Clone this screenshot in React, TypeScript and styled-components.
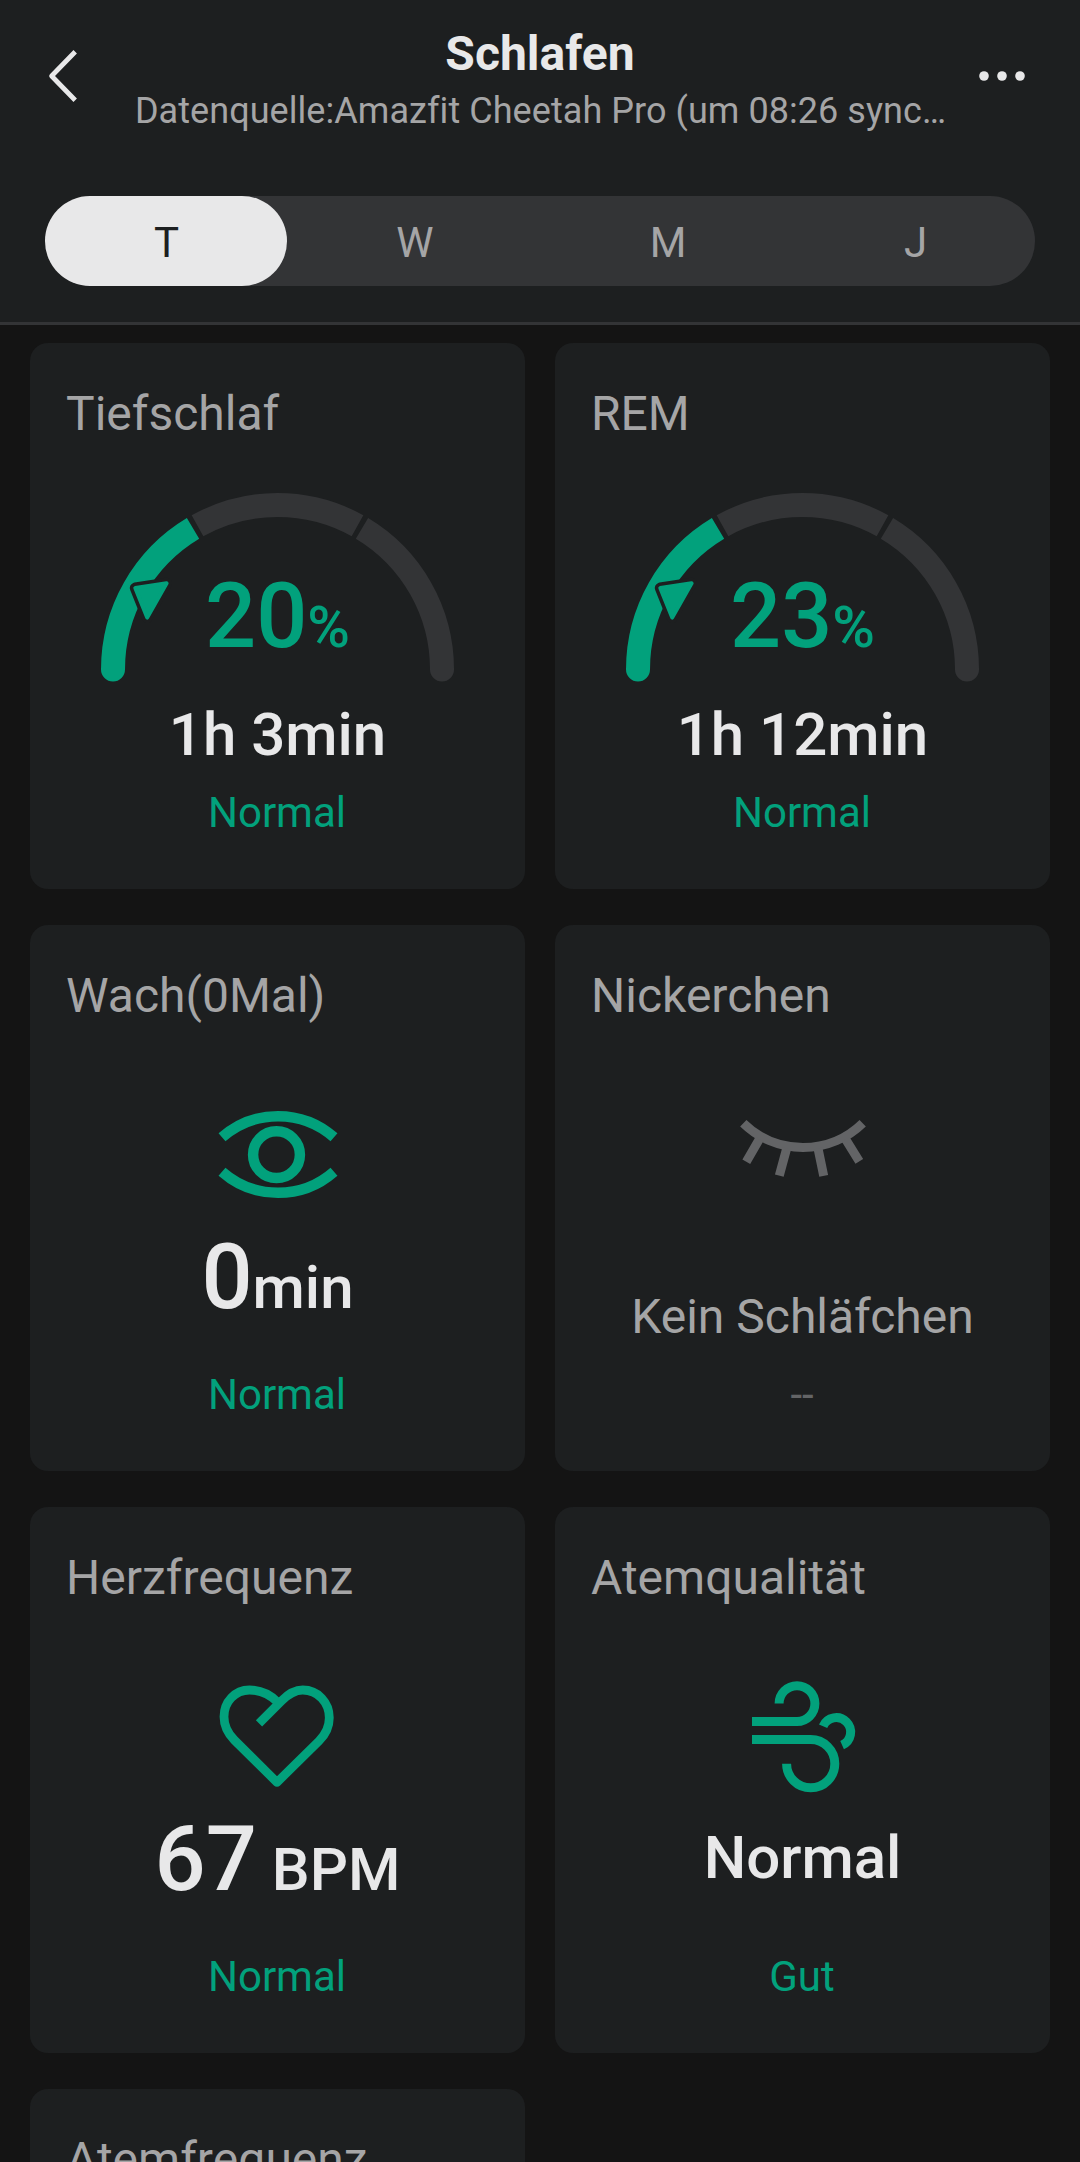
import React from "react";
import styled, { createGlobalStyle } from "styled-components";

const color = {
  page: "#141414",
  surface: "#1d1f20",
  track: "#333436",
  accent: "#02a17c",
  text: "#e8e8e9",
  muted: "#a5a5a6",
  faint: "#636466",
};

const GlobalStyle = createGlobalStyle`
  *, *::before, *::after { box-sizing: border-box; }
  html, body { margin: 0; background: ${color.page}; }
  body { font-family: Roboto, "Liberation Sans", sans-serif; color: ${color.text}; }
`;

const Screen = styled.div`
  display: flex;
  flex-direction: column;
  width: 1080px;
  height: 2162px;
  overflow: hidden;
  background: ${color.page};
`;

const Header = styled.header`
  flex: none;
  height: 325px;
  background: ${color.surface};
  border-bottom: 3px solid ${color.track};
`;

const TopBar = styled.div`
  display: grid;
  grid-template-columns: 126px 1fr 126px;
  height: 196px;
  padding-top: 25px;
`;

const IconButton = styled.button<{ $end?: boolean }>`
  display: flex;
  align-items: center;
  justify-content: center;
  width: 126px;
  height: 102px;
  padding: 0 ${(p) => (p.$end ? 31 : 0)}px 0 0;
  border: 0;
  background: none;
  color: ${color.text};
`;

const Heading = styled.div`
  display: flex;
  flex-direction: column;
  align-items: center;
  gap: 8px;
  padding-top: 1px;
  white-space: nowrap;
`;

const Title = styled.h1`
  margin: 0;
  font-size: 48px;
  line-height: 56px;
  font-weight: 700;
`;

const Subtitle = styled.p`
  margin: 0;
  padding-left: 1px;
  font-size: 36px;
  line-height: 42px;
  letter-spacing: 0.06px;
  color: ${color.muted};
`;

const Tabs = styled.nav`
  display: grid;
  grid-template-columns: 242px 1fr 1fr 242px;
  height: 90px;
  margin: 0 45px;
  border-radius: 45px;
  background: ${color.track};
`;

const Tab = styled.button<{ $active?: boolean }>`
  height: 90px;
  padding: 0 0 0 ${(p) => (p.$active ? 1 : 3)}px;
  border: 0;
  border-radius: 45px;
  font: 400 42px/94px Roboto, sans-serif;
  background: ${(p) => (p.$active ? color.text : "transparent")};
  color: ${(p) => (p.$active ? color.surface : color.muted)};
`;

const CardGrid = styled.main`
  display: grid;
  grid-template-columns: 495px 495px;
  grid-auto-rows: 546px;
  gap: 36px 30px;
  padding: 18px 30px 0;
`;

const Card = styled.section`
  display: flex;
  flex-direction: column;
  align-items: center;
  padding: 43px 0 51px;
  border-radius: 18px;
  background: ${color.surface};
`;

const CardTitle = styled.h2`
  align-self: flex-start;
  margin: 0;
  padding-left: 36px;
  font-size: 48px;
  line-height: 56px;
  font-weight: 400;
  color: ${color.muted};
`;

const GaugeFigure = styled.div`
  display: grid;
  justify-items: center;
  height: 258px;

  > * {
    grid-area: 1 / 1;
  }
`;

const GaugeValue = styled.div`
  padding-top: 122px;
  font-size: 90px;
  line-height: 106px;
  font-weight: 500;
  color: ${color.accent};
`;

const Percent = styled.span`
  font-size: 58px;
`;

const IconFigure = styled.div`
  height: 201px;
  padding: 65px 0 0;
`;

const Value = styled.div<{ $size?: number; $top?: number; $muted?: boolean }>`
  padding-top: ${(p) => p.$top ?? 0}px;
  font-size: ${(p) => p.$size ?? 60}px;
  line-height: ${(p) => (p.$size === 90 ? 106 : p.$size === 48 ? 56 : 70)}px;
  font-weight: ${(p) => (p.$muted ? 400 : 500)};
  color: ${(p) => (p.$muted ? color.muted : color.text)};
  white-space: pre;
`;

const Unit = styled.span`
  font-size: 60px;
`;

const Status = styled.div<{ $faint?: boolean }>`
  margin-top: auto;
  padding-right: 1px;
  font-size: 42px;
  line-height: 50px;
  color: ${(p) => (p.$faint ? color.faint : color.accent)};
`;

const point = (deg: number, r = 164.5) => {
  const a = (deg * Math.PI) / 180;
  return `${(177.5 - r * Math.cos(a)).toFixed(2)} ${(176.5 - r * Math.sin(a)).toFixed(2)}`;
};
const arc = (from: number, to: number) =>
  `M${point(from)} A164.5 164.5 0 0 1 ${point(to)}`;

function Gauge({ value }: { value: string }) {
  return (
    <GaugeFigure>
      <svg width="355" height="240" viewBox="0 -51 355 240" fill="none">
        <path d={arc(60.9, 119.1)} stroke={color.track} strokeWidth="24" />
        <path d={arc(120.9, 180)} stroke={color.track} strokeWidth="24" />
        <path d="M330 175v1.5a12 12 0 0 0 24 0v-1.5z" fill={color.track} />
        <path d={arc(0, 59.1)} stroke={color.accent} strokeWidth="24" />
        <path d="M1 175v1.5a12 12 0 0 0 24 0v-1.5z" fill={color.accent} />
        <path
          d="M35.3 95L66.6 90.2L47.2 124.6Z"
          fill={color.surface}
          stroke={color.surface}
          strokeWidth="11"
          strokeLinejoin="round"
        />
        <path
          d="M35.3 95L66.6 90.2L47.2 124.6Z"
          fill={color.accent}
          stroke={color.accent}
          strokeWidth="4"
          strokeLinejoin="round"
        />
      </svg>
      <GaugeValue>
        {value}
        <Percent>%</Percent>
      </GaugeValue>
    </GaugeFigure>
  );
}

const Glyph = styled.svg.attrs({ width: 132, height: 132 })`
  display: block;
  fill: none;
  stroke: ${color.accent};
`;

const EyeIcon = () => (
  <Glyph viewBox="0.5 0 132 132" strokeWidth="10.5">
    <path d="M10.5 48.3A84.9 84.9 0 0 1 122.5 48.3" />
    <path d="M10.5 82.7A84.9 84.9 0 0 0 122.5 82.7" />
    <circle cx="65" cy="65.7" r="23.4" />
  </Glyph>
);

const LashGlyph = styled(Glyph)`
  stroke: ${color.faint};
`;

const LashesIcon = () => (
  <LashGlyph viewBox="0.5 0 132 132" strokeWidth="9">
    <path d="M6.8 34.2A85.5 85.5 0 0 0 126.2 34.2" />
    <path d="M22.8 50.3L9.8 72.7M50.2 59.3L42.8 86.7M81.5 59.3L87.2 86.8M109.2 50.3L122.8 72.3" />
  </LashGlyph>
);

const HeartIcon = () => (
  <Glyph viewBox="0.5 0 132 132" strokeWidth="8.8" strokeLinejoin="round">
    <path d="M47.5 52.3L70 29.8C77 22.8 83.5 19 91.2 19C106.5 19 117.8 31.5 117.8 46.7C117.8 56 114 63.5 107.5 70L65.5 111.3L22.8 69C16.5 62.5 12.5 55 12.5 45.7C12.5 31 23.5 19 38 19C48 19 58 23 66 31" />
  </Glyph>
);

const WindIcon = () => (
  <Glyph viewBox="0.5 0 132 132" strokeWidth="9">
    <path d="M15.5 50.5H60.5A17.9 17.9 0 1 0 42.6 32.6" />
    <path d="M15.5 68.6H74.2A24.1 24.1 0 1 1 50.1 92.7" />
    <path d="M86.6 55.2A14.4 14.4 0 1 1 105.6 74.2" />
  </Glyph>
);

export default function App() {
  return (
    <Screen>
      <GlobalStyle />
      <Header>
        <TopBar>
          <IconButton aria-label="Zurück">
            <svg width="32" height="54" viewBox="0 0 32 54" fill="none" stroke="currentColor" strokeWidth="4.8">
              <path d="M28.2 2.8L4.6 27L28.2 51.2" strokeLinejoin="round" />
            </svg>
          </IconButton>
          <Heading>
            <Title>Schlafen</Title>
            <Subtitle>Datenquelle:Amazfit Cheetah Pro (um 08:26 sync…</Subtitle>
          </Heading>
          <IconButton $end aria-label="Mehr">
            <svg width="48" height="12" viewBox="0 0 48 12" fill="currentColor">
              <circle cx="6" cy="6" r="4.8" />
              <circle cx="24" cy="6" r="4.8" />
              <circle cx="42" cy="6" r="4.8" />
            </svg>
          </IconButton>
        </TopBar>
        <Tabs>
          <Tab $active>T</Tab>
          <Tab>W</Tab>
          <Tab>M</Tab>
          <Tab>J</Tab>
        </Tabs>
      </Header>
      <CardGrid>
        <Card>
          <CardTitle>Tiefschlaf</CardTitle>
          <Gauge value="20" />
          <Value>1h 3min</Value>
          <Status>Normal</Status>
        </Card>
        <Card>
          <CardTitle>REM</CardTitle>
          <Gauge value="23" />
          <Value>1h 12min</Value>
          <Status>Normal</Status>
        </Card>
        <Card>
          <CardTitle>Wach(0Mal)</CardTitle>
          <IconFigure>
            <EyeIcon />
          </IconFigure>
          <Value $size={90}>
            0<Unit>min</Unit>
          </Value>
          <Status>Normal</Status>
        </Card>
        <Card>
          <CardTitle>Nickerchen</CardTitle>
          <IconFigure>
            <LashesIcon />
          </IconFigure>
          <Value $size={48} $top={64} $muted>
            Kein Schläfchen
          </Value>
          <Status $faint>--</Status>
        </Card>
        <Card>
          <CardTitle>Herzfrequenz</CardTitle>
          <IconFigure>
            <HeartIcon />
          </IconFigure>
          <Value $size={90}>
            67<Unit> BPM</Unit>
          </Value>
          <Status>Normal</Status>
        </Card>
        <Card>
          <CardTitle>Atemqualität</CardTitle>
          <IconFigure>
            <WindIcon />
          </IconFigure>
          <Value $top={16}>Normal</Value>
          <Status>Gut</Status>
        </Card>
        <Card>
          <CardTitle>Atemfrequenz</CardTitle>
        </Card>
      </CardGrid>
    </Screen>
  );
}
